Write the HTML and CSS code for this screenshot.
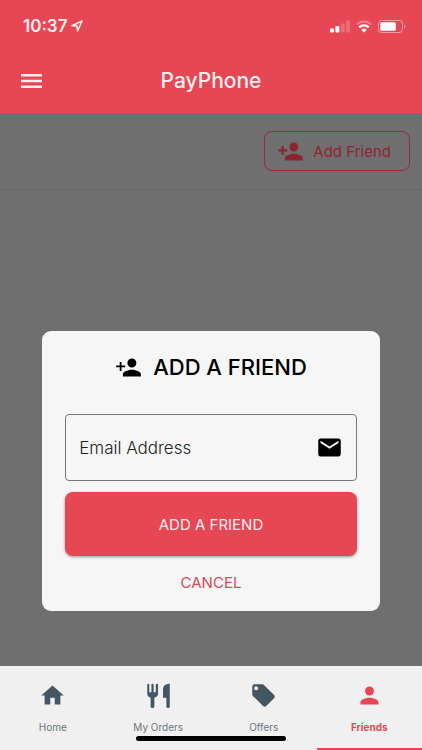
FILE: index.html
```html
<!DOCTYPE html>
<html lang="en">
<head>
<meta charset="utf-8">
<meta name="viewport" content="width=device-width, initial-scale=1">
<title>PayPhone</title>
<link rel="stylesheet" href="styles.css">
</head>
<body>
<header class="header">
  <div class="status">
    <span class="time">10:37</span>
    <svg class="location" viewBox="0 0 12 12"><path d="M1 5.8 11 1 6.6 11 6 6z" fill="none" stroke="currentColor" stroke-width="1.5" stroke-linejoin="round"/></svg>
    <svg class="signal" viewBox="0 0 20 13" fill="currentColor"><rect x="0" y="8.5" width="4" height="4" rx="1"/><rect x="5.4" y="6" width="4" height="6.5" rx="1"/><g opacity=".2"><rect x="10.8" y="3.5" width="4" height="9" rx="1"/><rect x="16" y="0.5" width="4" height="12" rx="1"/></g></svg>
    <svg class="wifi" viewBox="0 0 16 13" fill="none" stroke="currentColor" stroke-width="2"><path d="M.8 4.6a10.2 10.2 0 0 1 14.4 0" opacity=".3"/><path d="M3.3 7.4a6.700 6.700 0 0 1 9.400 0" stroke-width="2.300"/><path d="M8 12.600 5.300 9.900a3.800 3.800 0 0 1 5.400 0z" fill="currentColor" stroke="none"/></svg>
    <svg class="battery" viewBox="0 0 28 13"><rect x=".5" y=".5" width="24" height="12" rx="3" fill="none" stroke="currentColor" opacity=".45"/><rect x="2.300" y="2.200" width="15.500" height="8.600" rx="1.500" fill="currentColor"/><path d="M26 4.400q1.600.6 1.600 2.100T26 8.600z" fill="currentColor" opacity=".45"/></svg>
  </div>
  <div class="appbar">
    <button class="menu" type="button" aria-label="Menu"><svg viewBox="0 0 22 16" fill="currentColor"><path d="M0 1h21v2.400H0zM0 6.800h21v2.400H0zM0 12.600h21V15H0z"/></svg></button>
    <h1 class="brand">PayPhone</h1>
  </div>
</header>
<main class="main">
  <div class="toolbar">
    <button class="add" type="button">
      <svg class="icon-person-add" viewBox="0 0 24 24" fill="currentColor"><path d="M15 12c2.21 0 4-1.79 4-4s-1.79-4-4-4-4 1.79-4 4 1.79 4 4 4zm-9-2V7H4v3H1v2h3v3h2v-3h3v-2H6zm9 4c-2.67 0-8 1.34-8 4v2h16v-2c0-2.66-5.33-4-8-4z"/></svg>
      Add Friend
    </button>
  </div>
  <form class="dialog" role="dialog" aria-labelledby="dialog-title">
    <h2 class="title" id="dialog-title">
      <svg class="icon-person-add" viewBox="0 0 24 24" fill="currentColor"><path d="M15 12c2.21 0 4-1.79 4-4s-1.79-4-4-4-4 1.79-4 4 1.79 4 4 4zM5.800 10.200V7H4.200v3.200H1v1.600h3.200V15h1.600v-3.200H9v-1.600zM15 14c-2.670 0-8 1.340-8 4v2h16v-2c0-2.660-5.330-4-8-4z"/></svg>
      ADD A FRIEND
    </h2>
    <label class="field">
      <input class="input" type="email" placeholder="Email Address" aria-label="Email Address">
      <svg class="icon-mail" viewBox="0 0 24 24" fill="currentColor"><path d="M20 4H4c-1.100 0-1.990.9-1.990 2L2 18c0 1.100.9 2 2 2h16c1.100 0 2-.9 2-2V6c0-1.100-.9-2-2-2zm0 4-8 5-8-5V6l8 5 8-5v2z"/></svg>
    </label>
    <button class="submit" type="submit">ADD A FRIEND</button>
    <button class="cancel" type="button">CANCEL</button>
  </form>
</main>
<nav class="tabs">
  <a class="tab" href="#home"><svg viewBox="0 0 24 24" fill="currentColor"><path d="M10 20v-6h4v6h5v-8h3L12 3 2 12h3v8z"/></svg>Home</a>
  <a class="tab" href="#orders"><svg viewBox="0 0 24 24" fill="currentColor"><path d="M2 2.500a.9.9 0 0 1 1.800 0V9h1.900V2.500a1 1 0 0 1 2 0V9h1.900V2.500a1 1 0 0 1 2 0V10c0 2.200-1.200 3.500-3.300 3.900V22a1 1 0 0 1-1 1H6a1 1 0 0 1-1-1v-8.100C3 13.500 2 12.200 2 10zM22 1.500V22a1 1 0 0 1-1 1h-1a1 1 0 0 1-1-1v-8h-3V7c0-3.500 2-5.500 6-5.500z"/></svg>My Orders</a>
  <a class="tab" href="#offers"><svg viewBox="0 0 24 24" fill="currentColor"><path d="M21.410 11.580l-9-9C12.050 2.220 11.550 2 11 2H4c-1.100 0-2 .9-2 2v7c0 .55.22 1.050.59 1.420l9 9c.36.36.86.58 1.410.58.55 0 1.050-.22 1.410-.59l7-7c.37-.36.59-.86.59-1.410 0-.55-.23-1.060-.59-1.420zM5.500 7.300a1.800 1.800 0 1 1 0-3.600 1.800 1.800 0 0 1 0 3.600z"/></svg>Offers</a>
  <a class="tab active" href="#friends" aria-current="page"><svg viewBox="0 0 24 24" fill="currentColor"><path d="M12 12c2.210 0 4-1.790 4-4s-1.790-4-4-4-4 1.790-4 4 1.790 4 4 4zm0 2c-2.670 0-8 1.340-8 4v2h16v-2c0-2.660-5.330-4-8-4z"/></svg>Friends</a>
  <span class="home-indicator"></span>
</nav>
</body>
</html>
```
FILE: styles.css
```css
* { box-sizing: border-box; }
body {
  margin: 0;
  min-height: 100vh;
  display: flex;
  flex-direction: column;
  background: #6f6f6f;
  font-family: Inter, "Liberation Sans", sans-serif;
}
button { font: inherit; cursor: pointer; }
svg { display: block; flex: none; }
.header { background: #e74655; color: #fdeef0; }
.status {
  display: flex;
  align-items: center;
  height: 52px;
  padding: 0 16px 0 23px;
}
.time { font-size: 17px; font-weight: 600; line-height: 20px; }
.location { width: 12px; height: 12px; margin-left: 4px; }
.signal { width: 20px; height: 13px; margin-left: auto; }
.wifi { width: 16px; height: 13px; margin-left: 6px; }
.battery { width: 28px; height: 13px; margin-left: 6px; }
.signal, .wifi, .battery { color: #fff; }
.appbar {
  display: grid;
  grid-template-columns: 1fr auto 1fr;
  align-items: center;
  height: 61px;
  padding: 0 21px 4px;
}
.menu { justify-self: start; padding: 0; border: 0; background: none; color: inherit; }
.menu svg { width: 22px; height: 16px; }
.brand { margin: 0; font-size: 21px; font-weight: 500; line-height: 28px; }
.main { flex: 1; display: flex; flex-direction: column; align-items: center; }
.toolbar {
  align-self: stretch;
  display: flex;
  justify-content: flex-end;
  padding: 18px 12px;
  border-bottom: 1px solid #666;
}
.add {
  display: flex;
  align-items: center;
  gap: 9px;
  height: 40px;
  padding: 0 18px 0 12px;
  border: 1px solid #932c38;
  border-radius: 8px;
  background: none;
  color: #8c2532;
  font-size: 15px;
}
.icon-person-add { width: 27px; height: 27px; }
.dialog {
  display: flex;
  flex-direction: column;
  width: 80%;
  margin: 141px 0 55px;
  padding: 20px 23px 16px;
  border-radius: 9px;
  background: #f6f6f6;
}
.title {
  display: flex;
  justify-content: center;
  align-items: center;
  gap: 11px;
  margin: 0 0 31px;
  color: #000;
  font-size: 22px;
  font-weight: 500;
  line-height: 32px;
}
.field {
  display: flex;
  align-items: center;
  height: 67px;
  padding: 0 13px;
  border: 1px solid #777;
  border-radius: 4px;
}
.input {
  flex: 1;
  min-width: 0;
  padding: 0;
  border: 0;
  outline: 0;
  background: none;
  color: #222;
  font: 300 17px/24px Inter, "Liberation Sans", sans-serif;
}
.input::placeholder { color: #222; opacity: 1; }
.icon-mail { width: 27px; height: 27px; color: #000; }
.submit {
  height: 64px;
  margin-top: 11px;
  border: 0;
  border-radius: 8px;
  background: #e74655;
  box-shadow: 0 1px 3px rgba(0, 0, 0, .4);
  color: #fdeef0;
  font-size: 15px;
}
.cancel {
  align-self: center;
  margin-top: 15px;
  padding: 0;
  border: 0;
  background: none;
  color: #d94a57;
  font-size: 15px;
  line-height: 24px;
}
.tabs {
  position: relative;
  display: grid;
  grid-template-columns: repeat(4, 1fr);
  background: #f0f0f0;
}
.tab {
  display: flex;
  flex-direction: column;
  align-items: center;
  gap: 10px;
  height: 84px;
  padding-top: 16px;
  border-bottom: 2px solid transparent;
  color: #6b757c;
  font-size: 10px;
  line-height: 16px;
  text-decoration: none;
}
.tab svg { width: 27px; height: 27px; color: #435662; }
.active { border-bottom-color: #e74655; color: #e74655; font-weight: 700; }
.active svg { color: inherit; }
.home-indicator {
  position: absolute;
  bottom: 9px;
  left: 50%;
  width: 150px;
  height: 5px;
  margin-left: -75px;
  border-radius: 3px;
  background: #000;
}
```
